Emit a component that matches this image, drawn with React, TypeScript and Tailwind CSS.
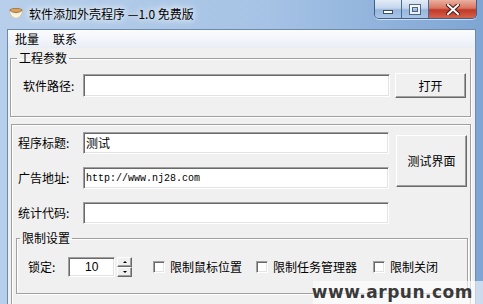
import React from "react"

const cn = "font-['Noto_Sans_CJK_SC','Noto_Sans',sans-serif]"

const sunken =
  "border-t border-l border-t-[#a0a0a0] border-l-[#a0a0a0] border-b border-r border-b-white border-r-white shadow-[inset_1px_1px_0_#696969,inset_-1px_-1px_0_#e3e3e3] bg-white"

const raised =
  "border border-t-white border-l-white border-b-[#696969] border-r-[#696969] shadow-[inset_-1px_-1px_0_#a0a0a0] bg-[#f0f0f0]"

const etched = "border border-[#a0a0a0] shadow-[inset_1px_1px_0_#fff,1px_1px_0_#fff]"

function AppIcon() {
  return (
    <svg width="14" height="12" viewBox="0 0 14 12">
      <ellipse cx="7" cy="3.5" rx="6.5" ry="2.5" fill="#8a5a2b" />
      <ellipse cx="7" cy="3.3" rx="5.3" ry="1.7" fill="#d9a35c" />
      <path d="M0.5 3.5 Q1 10 7 11.5 Q13 10 13.5 3.5 Q10 6.5 7 6 Q4 6.5 0.5 3.5Z" fill="#fbf3df" stroke="#c9b48a" strokeWidth="0.6" />
    </svg>
  )
}

function CaptionButtons() {
  return (
    <div className="flex h-[19px] overflow-hidden rounded-b-[5px] border border-t-0 border-[#3f5f8a] shadow-[0_1px_0_rgba(255,255,255,0.6)]">
      <div className="flex w-[27px] items-center justify-center border-r border-[#4a6a96] bg-[linear-gradient(180deg,#e3ecf7_0%,#c4d6ec_45%,#98b6dc_55%,#a9c5e8_100%)]">
        <div className="mt-[5px] h-[4px] w-[10px] border border-[#3a4d66] bg-white" />
      </div>
      <div className="flex w-[27px] items-center justify-center border-r border-[#4a6a96] bg-[linear-gradient(180deg,#e3ecf7_0%,#c4d6ec_45%,#98b6dc_55%,#a9c5e8_100%)]">
        <div className="h-[9px] w-[10px] border-2 border-white shadow-[0_0_0_1px_#3a4d66,inset_0_0_0_1px_#3a4d66] opacity-80" />
      </div>
      <div className="flex w-[47px] items-center justify-center bg-[linear-gradient(180deg,#eab0a2_0%,#d9765f_45%,#c0392a_55%,#d5624a_100%)]">
        <svg width="14" height="11" viewBox="0 0 14 11">
          <path d="M2 1 L12 10 M12 1 L2 10" stroke="#4a1c14" strokeWidth="4" strokeLinecap="square" />
          <path d="M2 1 L12 10 M12 1 L2 10" stroke="#fff" strokeWidth="2" strokeLinecap="square" />
        </svg>
      </div>
    </div>
  )
}

function Checkbox({ label, width }: { label: string; width: string }) {
  return (
    <div className={`flex items-center gap-[5px] ${width}`}>
      <div className={`h-[12px] w-[12px] ${sunken}`} />
      <span className="text-[12px] leading-[14px]">{label}</span>
    </div>
  )
}

export default function App() {
  return (
    <div className={`relative h-[304px] w-[483px] overflow-hidden bg-[linear-gradient(90deg,#b7cfea_0%,#a6c3e5_55%,#7ea5d3_100%)] text-black ${cn}`}>
      {/* title bar */}
      <div className="flex h-[29px] items-start">
        <div className="ml-[9px] mt-[7px]">
          <AppIcon />
        </div>
        <div className="ml-[6px] mt-[6px] text-[12px] leading-[16px] [text-shadow:0_0_6px_#fff,0_0_10px_#fff]">
          软件添加外壳程序 —1.0 免费版
        </div>
        <div className="ml-auto mr-[6px]">
          <CaptionButtons />
        </div>
      </div>

      {/* client area */}
      <div className="mx-[7px] h-[275px] border border-b-0 border-[#6f8ab0] bg-[#f0f0f0]">
        {/* menu */}
        <div className="flex h-[18px] items-center bg-[linear-gradient(180deg,#fbfcfe,#e9eef6)] text-[12px] leading-[14px]">
          <span className="px-[7px]">批量</span>
          <span className="px-[7px]">联系</span>
        </div>

        {/* 工程参数 */}
        <fieldset className={`ml-[2px] mt-[3px] h-[66px] w-[461px] ${etched}`}>
          <legend className="ml-[6px] px-[2px] text-[12px] leading-[14px]">工程参数</legend>
          <div className="flex items-center pl-[12px] pt-[8px]">
            <span className="w-[60px] text-[12px] leading-[14px]">软件路径:</span>
            <div className={`h-[23px] w-[307px] ${sunken}`} />
            <button className={`ml-[5px] h-[25px] w-[71px] text-[12px] ${raised}`}>打开</button>
          </div>
        </fieldset>

        {/* second group */}
        <div className={`ml-[3px] mt-[7px] h-[190px] w-[460px] ${etched}`}>
          <div className="flex pl-[6px] pt-[7px]">
            <div className="flex flex-col gap-[13px]">
              <div className="flex items-center">
                <span className="w-[65px] text-[12px] leading-[14px]">程序标题:</span>
                <div className={`flex h-[22px] w-[306px] items-center px-[2px] text-[12px] ${sunken}`}>测试</div>
              </div>
              <div className="flex items-center">
                <span className="w-[65px] text-[12px] leading-[14px]">广告地址:</span>
                <div className={`flex h-[22px] w-[306px] items-center px-[2px] font-['Liberation_Mono',monospace] text-[10px] ${sunken}`}>
                  http://www.nj28.com
                </div>
              </div>
              <div className="flex items-center">
                <span className="w-[65px] text-[12px] leading-[14px]">统计代码:</span>
                <div className={`h-[22px] w-[306px] ${sunken}`} />
              </div>
            </div>
            <button className={`ml-[7px] mt-[3px] h-[52px] w-[71px] text-[12px] ${raised}`}>测试界面</button>
          </div>

          {/* 限制设置 */}
          <fieldset className={`ml-[4px] mt-[7px] h-[63px] w-[452px] ${etched}`}>
            <legend className="ml-[3px] px-[2px] text-[12px] leading-[14px]">限制设置</legend>
            <div className="flex items-center pl-[11px] pt-[12px]">
              <span className="w-[40px] text-[12px] leading-[14px]">锁定:</span>
              <div className={`flex h-[20px] w-[47px] items-center pl-[16px] font-['Liberation_Sans',sans-serif] text-[12px] ${sunken}`}>
                10
              </div>
              <div className="ml-[2px] flex h-[20px] w-[15px] flex-col">
                <div className={`flex h-[10px] items-center justify-center ${raised}`}>
                  <div className="h-0 w-0 border-x-[2px] border-b-[2px] border-x-transparent border-b-black" />
                </div>
                <div className={`flex h-[10px] items-center justify-center ${raised}`}>
                  <div className="h-0 w-0 border-x-[2px] border-t-[2px] border-x-transparent border-t-black" />
                </div>
              </div>
              <div className="ml-[21px]">
                <Checkbox label="限制鼠标位置" width="w-[103px]" />
              </div>
              <Checkbox label="限制任务管理器" width="w-[117px]" />
              <Checkbox label="限制关闭" width="w-[80px]" />
            </div>
          </fieldset>
        </div>
      </div>

      {/* watermark */}
      <div className="absolute bottom-0 right-0 flex h-[23px] w-[170px] items-center justify-end bg-white/60 pr-[10px] font-['DejaVu_Sans',sans-serif] text-[17px] font-bold leading-none tracking-[0.5px] text-[#3a3a3a]">
        www.arpun.com
      </div>
    </div>
  )
}
